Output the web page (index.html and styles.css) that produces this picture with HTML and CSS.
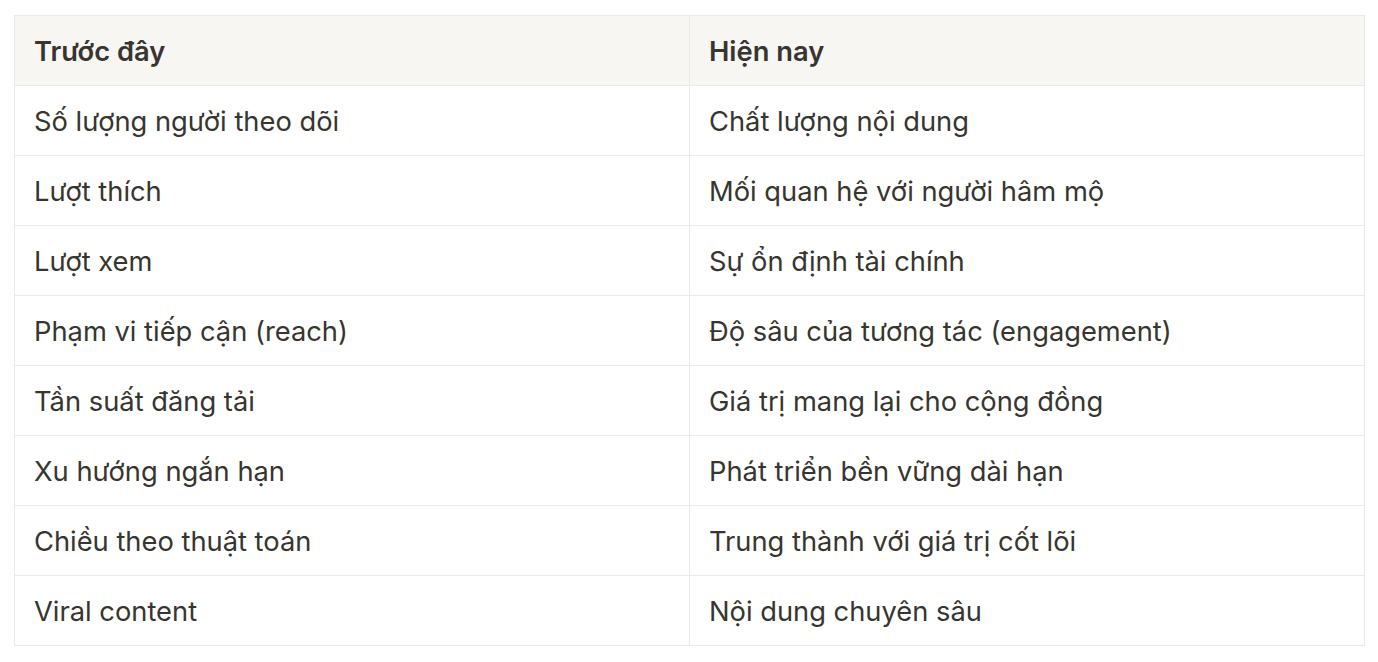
FILE: index.html
```html
<!DOCTYPE html>
<html lang="vi">
<head>
<meta charset="utf-8">
<link rel="stylesheet" href="styles.css">
</head>
<body>
<table class="cmp">
  <thead>
    <tr><th>Trước đây</th><th>Hiện nay</th></tr>
  </thead>
  <tbody>
    <tr><td>Số lượng người theo dõi</td><td>Chất lượng nội dung</td></tr>
    <tr><td>Lượt thích</td><td>Mối quan hệ với người hâm mộ</td></tr>
    <tr><td>Lượt xem</td><td>Sự ổn định tài chính</td></tr>
    <tr><td>Phạm vi tiếp cận (reach)</td><td>Độ sâu của tương tác (engagement)</td></tr>
    <tr><td>Tần suất đăng tải</td><td>Giá trị mang lại cho cộng đồng</td></tr>
    <tr><td>Xu hướng ngắn hạn</td><td>Phát triển bền vững dài hạn</td></tr>
    <tr><td>Chiều theo thuật toán</td><td>Trung thành với giá trị cốt lõi</td></tr>
    <tr><td>Viral content</td><td>Nội dung chuyên sâu</td></tr>
  </tbody>
</table>
</body>
</html>
```

FILE: styles.css
```css
html, body {
  margin: 0;
  background: #ffffff;
}
body {
  padding: 15px 0 0 14px;
  font-family: Inter, "Noto Sans", sans-serif;
  color: #37352f;
}
.cmp {
  border-collapse: collapse;
  width: 1351px;
  table-layout: fixed;
}
.cmp th, .cmp td {
  border: 1px solid #e9e9e7;
  height: 70px;
  padding: 4px 20px 0 19px;
  text-align: left;
  vertical-align: middle;
  font-size: 27.3px;
  line-height: 1.2;
  box-sizing: border-box;
}
.cmp th {
  background: #f7f6f3;
  font-weight: 600;
}
.cmp td {
  font-weight: 400;
}
```
